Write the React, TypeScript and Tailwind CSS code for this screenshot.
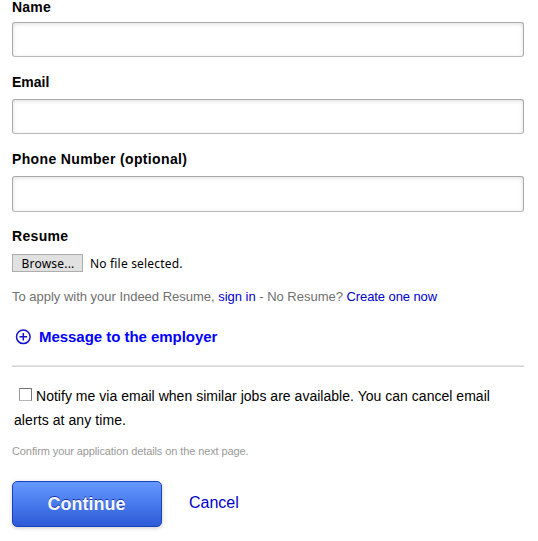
type FieldProps = { label: string; name: string; labelClass: string; inputClass: string };

function Field({ label, name, labelClass, inputClass }: FieldProps) {
  return (
    <div className="flex flex-col">
      <label htmlFor={name} className={`text-[14px] leading-[18px] font-bold ${labelClass}`}>
        {label}
      </label>
      <input
        id={name}
        className={`w-full rounded-[3px] border border-[#a9a9a9] border-b-[#b8b8b8] bg-white px-2 text-sm shadow-[inset_0_1px_4px_rgba(0,0,0,0.13)] outline-none ${inputClass}`}
      />
    </div>
  );
}

export default function App() {
  return (
    <form className="h-[541px] w-[538px] overflow-hidden bg-white pr-[14px] pl-[12px] font-['Liberation_Sans',Arial,sans-serif] text-black">
      <div className="-mt-[2px]">
        <Field label="Name" name="name" labelClass="h-[24px] tracking-[0.2px]" inputClass="h-[35px]" />
        <Field label="Email" name="email" labelClass="mt-[16px] h-[26px]" inputClass="h-[35px]" />
        <Field label="Phone Number (optional)" name="phone" labelClass="mt-[16px] h-[26px] tracking-[0.35px]" inputClass="h-[36px]" />
      </div>
      <div className="mt-[15px] h-[27px] text-[14px] leading-[18px] font-bold tracking-[0.33px]">Resume</div>
      <div className="flex h-[18px] items-center text-[12px]">
        <button type="button" className="h-[18px] w-[71px] border border-[#adadad] bg-[#e1e1e1] pt-px pl-px font-['Noto_Sans',sans-serif] text-[12px] leading-[15px] tracking-[0.2px]">
          Browse...
        </button>
        <span className="ml-[7px] pt-px font-['Noto_Sans',sans-serif] leading-[18px] tracking-[0.18px] whitespace-nowrap">No file selected.</span>
      </div>
      <p className="mt-[15px] h-[20px] text-[13px] leading-[20px] tracking-[-0.015px] whitespace-nowrap text-[#6f6f6f]">
        To apply with your Indeed Resume, <a className="text-[#0000cc]">sign in</a> - No Resume?{" "}
        <a className="tracking-[-0.09px] text-[#0000cc]">Create one now</a>
      </p>
      <div className="mt-[20px] flex h-[20px] items-center pl-[3px] text-[#0000ff]">
        <svg width="16" height="16" viewBox="0 0 16 16" fill="none" stroke="#1414c8" strokeWidth="1.5">
          <circle cx="8.3" cy="7.8" r="6.8" />
          <path d="M8.3 4v7.6M4.5 7.8h7.6" />
        </svg>
        <a className="ml-[8px] text-[15px] leading-[20px] font-bold tracking-[-0.04px] whitespace-nowrap">Message to the employer</a>
      </div>
      <hr className="mt-[18px] h-[2px] border-0 border-t border-[#e6e6e6] bg-[#d5d5d5]" />
      <label className="mt-[17px] block h-[48px] pl-[2px] text-[14px] leading-[24px] tracking-[0.025px] whitespace-nowrap">
        <input type="checkbox" className="mr-[4px] ml-[5px] inline-block size-[13px] appearance-none border border-[#777] border-b-[#b5b5b5] border-l-[#999] bg-white align-[0px]" />
        Notify me via email when similar jobs are available. You can cancel email
        <br />
        <span className="tracking-[0.08px]">alerts at any time.</span>
      </label>
      <p className="mt-[11px] h-[16px] text-[11px] leading-[16px] tracking-[-0.1px] whitespace-nowrap text-[#999]">
        Confirm your application details on the next page.
      </p>
      <div className="mt-[22px] flex h-[46px] items-center">
        <button
          type="button"
          className="h-[46px] w-[150px] rounded-[5px] border border-[#1642bb] bg-linear-to-b from-[#6598ff] to-[#2e5ad7] pr-px text-[18px] font-bold text-[#f5f7ff] shadow-[0_1px_4px_rgba(0,0,0,0.2)] text-shadow-[0_-1px_0_rgba(15,34,153,0.85)]"
        >
          Continue
        </button>
        <a className="ml-[27px] pb-[2px] text-[16px] leading-[20px] text-[#0000cc]">Cancel</a>
      </div>
    </form>
  );
}
